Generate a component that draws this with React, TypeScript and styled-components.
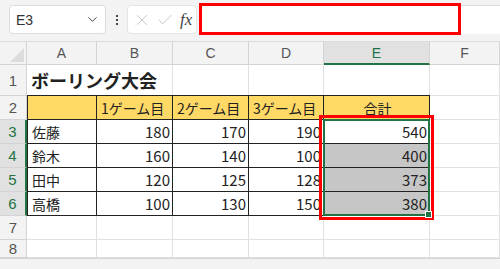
import React from 'react'
import styled, { createGlobalStyle } from 'styled-components'
import { ChevronDown, X, Check } from 'lucide-react'

const GREEN = '#217346'
const FONT = `"Noto Sans CJK JP", "Liberation Sans", sans-serif`

const GlobalStyle = createGlobalStyle`
  html, body { margin: 0; padding: 0; background: #fff; }
  body { font-family: ${FONT}; width: 500px; height: 269px; overflow: hidden; }
`

const Frame = styled.div`
  width: 500px;
  height: 269px;
  background: #f3f3f3;
  display: flex;
  flex-direction: column;
`

const Toolbar = styled.div`
  height: 41px;
  display: flex;
  align-items: flex-start;
  padding-top: 5px;
  box-sizing: border-box;
`

const NameBox = styled.div`
  margin-left: 9px;
  width: 97px;
  height: 29px;
  box-sizing: border-box;
  background: #fff;
  border: 1px solid #dcdcdc;
  border-radius: 4px;
  display: flex;
  align-items: center;
  justify-content: space-between;
  padding: 0 5px 0 6px;
  font-family: "Liberation Sans", sans-serif;
  font-size: 14px;
  color: #333;
`

const Dots = styled.div`
  width: 21px;
  height: 29px;
  display: flex;
  flex-direction: column;
  align-items: center;
  justify-content: center;
  gap: 2px;
  span {
    width: 2px;
    height: 2px;
    background: #444;
  }
`

const FxButtons = styled.div`
  width: 70px;
  height: 29px;
  box-sizing: border-box;
  background: #fff;
  border: 1px solid #e4e4e4;
  border-radius: 4px;
  display: flex;
  align-items: center;
  padding-left: 5px;
  gap: 5px;
  color: #c4c4c4;
`

const FxLabel = styled.span`
  font-family: "Liberation Serif", serif;
  font-style: italic;
  font-size: 17px;
  color: #444;
  margin-left: 1px;
`

const FormulaBar = styled.div`
  flex: 1;
  margin-left: 2px;
  height: 29px;
  background: #fff;
  border-top: 1px solid #dcdcdc;
  box-sizing: border-box;
  display: flex;
`

const RedInput = styled.div`
  width: 262px;
  height: 32px;
  margin-top: -3px;
  box-sizing: border-box;
  border: 3px solid #ff0000;
  background: #fff;
`

const Sheet = styled.div`
  position: relative;
  display: grid;
  grid-template-columns: 27px 70px 76px 76px 75px 106px 1fr;
  grid-template-rows: 24px 31px repeat(6, 24px);
  background: #fff;
  border-bottom: 1px solid #d4d4d4;
`

const Corner = styled.div`
  background: #f3f3f3;
  border-right: 1px solid #d4d4d4;
  border-bottom: 1px solid #d4d4d4;
  border-top: 1px solid #dcdcdc;
  position: relative;
  overflow: hidden;
  &::after {
    content: '';
    position: absolute;
    right: 2px;
    bottom: 2px;
    border-style: solid;
    border-width: 0 0 14px 14px;
    border-color: transparent transparent #dcdcdc transparent;
  }
`

const ColHead = styled.div<{ $active?: boolean }>`
  background: ${p => (p.$active ? '#e1e1e1' : '#f3f3f3')};
  border-right: 1px solid #d4d4d4;
  border-bottom: ${p => (p.$active ? `2px solid ${GREEN}` : '1px solid #d4d4d4')};
  border-top: 1px solid #dcdcdc;
  display: flex;
  align-items: center;
  justify-content: center;
  font-family: "Liberation Sans", sans-serif;
  font-size: 14px;
  color: ${p => (p.$active ? GREEN : '#555')};
`

const RowHead = styled.div<{ $active?: boolean }>`
  background: ${p => (p.$active ? '#e1e1e1' : '#f3f3f3')};
  border-right: ${p => (p.$active ? `2px solid ${GREEN}` : '1px solid #d4d4d4')};
  border-bottom: 1px solid #d4d4d4;
  display: flex;
  align-items: center;
  justify-content: center;
  font-family: "Liberation Sans", sans-serif;
  font-size: 15px;
  color: ${p => (p.$active ? GREEN : '#555')};
`

const Cell = styled.div<{
  $align?: 'left' | 'right' | 'center'
  $fill?: string
  $table?: boolean
  $bold?: boolean
  $num?: boolean
  $span?: number
}>`
  grid-column: ${p => (p.$span ? `span ${p.$span}` : 'auto')};
  background: ${p => p.$fill || '#fff'};
  border-right: 1px solid ${p => (p.$table ? '#222' : '#e1e1e1')};
  border-bottom: 1px solid ${p => (p.$table ? '#222' : '#e1e1e1')};
  display: flex;
  align-items: center;
  justify-content: ${p =>
    p.$align === 'right' ? 'flex-end' : p.$align === 'center' ? 'center' : 'flex-start'};
  padding: 0 2px 0 4px;
  font-size: ${p => (p.$bold ? '18px' : p.$num ? '15px' : '14px')};
  font-weight: ${p => (p.$bold ? 700 : 400)};
  color: #222;
  white-space: nowrap;
  min-width: 0;
`

const TableTop = styled(Cell)`
  border-top: 1px solid #222;
  margin-top: -1px;
`

const Selection = styled.div`
  position: absolute;
  grid-column: 6 / 7;
  grid-row: 4 / 8;
  top: -1px;
  left: -1px;
  right: 0;
  bottom: 0;
  border: 2px solid ${GREEN};
  outline: 3px solid #ff0000;
  outline-offset: 1px;
  pointer-events: none;
  z-index: 2;
  &::after {
    content: '';
    position: absolute;
    right: -4px;
    bottom: -4px;
    width: 5px;
    height: 5px;
    background: ${GREEN};
    border: 1px solid #fff;
  }
`

const games = [
  { name: '佐藤', s: [180, 170, 190], total: 540 },
  { name: '鈴木', s: [160, 140, 100], total: 400 },
  { name: '田中', s: [120, 125, 128], total: 373 },
  { name: '高橋', s: [100, 130, 150], total: 380 },
]

const cols = ['A', 'B', 'C', 'D', 'E', 'F']

export default function App() {
  return (
    <Frame>
      <GlobalStyle />
      <Toolbar>
        <NameBox>
          E3
          <ChevronDown size={15} color="#444" strokeWidth={1.6} />
        </NameBox>
        <Dots>
          <span />
          <span />
          <span />
        </Dots>
        <FxButtons>
          <X size={18} strokeWidth={1.3} />
          <Check size={18} strokeWidth={1.3} />
          <FxLabel>fx</FxLabel>
        </FxButtons>
        <FormulaBar>
          <RedInput />
        </FormulaBar>
      </Toolbar>
      <Sheet>
        <Corner />
        {cols.map(c => (
          <ColHead key={c} $active={c === 'E'}>
            {c}
          </ColHead>
        ))}

        <RowHead>1</RowHead>
        <Cell $bold $span={2}>
          ボーリング大会
        </Cell>
        <Cell />
        <Cell />
        <Cell />
        <Cell />

        <RowHead>2</RowHead>
        <TableTop $table $fill="#ffd966" style={{ borderLeft: '1px solid #222' }} />
        <TableTop $table $fill="#ffd966">1ゲーム目</TableTop>
        <TableTop $table $fill="#ffd966">2ゲーム目</TableTop>
        <TableTop $table $fill="#ffd966">3ゲーム目</TableTop>
        <TableTop $table $fill="#ffd966" $align="center">
          合計
        </TableTop>
        <Cell />

        {games.map((g, i) => (
          <React.Fragment key={g.name}>
            <RowHead $active>{i + 3}</RowHead>
            <Cell $table style={{ borderLeft: '1px solid #222' }}>
              {g.name}
            </Cell>
            {g.s.map((v, j) => (
              <Cell key={j} $table $num $align="right">
                {v}
              </Cell>
            ))}
            <Cell $table $num $align="right" $fill={i === 0 ? '#fff' : '#c6c6c6'}>
              {g.total}
            </Cell>
            <Cell />
          </React.Fragment>
        ))}

        {[7, 8].map(r => (
          <React.Fragment key={r}>
            <RowHead>{r}</RowHead>
            {cols.map(c => (
              <Cell key={c} />
            ))}
          </React.Fragment>
        ))}
        <Selection />
      </Sheet>
    </Frame>
  )
}
